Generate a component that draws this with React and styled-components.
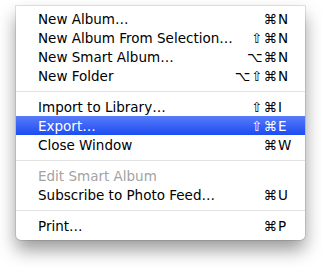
import React from 'react';
import styled, { createGlobalStyle } from 'styled-components';

const Global = createGlobalStyle`
  html, body {
    margin: 0;
    padding: 0;
    background: #ffffff;
  }
  body {
    font-family: "DejaVu Sans", "Liberation Sans", sans-serif;
  }
`;

const Page = styled.div`
  width: 322px;
  height: 268px;
  padding: 6px 0 0 16px;
  box-sizing: border-box;
`;

const Menu = styled.div`
  width: 289px;
  padding: 3px 0 5px;
  background: #ffffff;
  border-radius: 0 0 5px 5px;
  box-shadow: 0 10px 18px rgba(0, 0, 0, 0.4), 0 0 0 1px rgba(0, 0, 0, 0.1);
  display: flex;
  flex-direction: column;
`;

const Item = styled.div`
  height: 19px;
  display: flex;
  align-items: center;
  padding: 0 13px 0 22px;
  font-size: 13.5px;
  color: ${p => (p.$disabled ? '#a3a3a3' : p.$active ? '#ffffff' : '#000000')};
  background: ${p => (p.$active ? 'linear-gradient(#587cf8, #1c4cf2)' : 'transparent')};
`;

const Label = styled.span`
  flex: 1;
  white-space: nowrap;
`;

const Shortcut = styled.span`
  display: flex;
  align-items: center;
`;

const Mods = styled.span`
  letter-spacing: 1px;
`;

const Key = styled.span`
  width: 14px;
  text-align: left;
`;

const Separator = styled.div`
  height: 1px;
  margin: 6px 0 5px;
  background: #e2e2e2;
`;

const menu = [
  { label: 'New Album…', mods: '⌘', key: 'N' },
  { label: 'New Album From Selection…', mods: '⇧⌘', key: 'N' },
  { label: 'New Smart Album…', mods: '⌥⌘', key: 'N' },
  { label: 'New Folder', mods: '⌥⇧⌘', key: 'N' },
  { sep: true },
  { label: 'Import to Library…', mods: '⇧⌘', key: 'I' },
  { label: 'Export…', mods: '⇧⌘', key: 'E', active: true },
  { label: 'Close Window', mods: '⌘', key: 'W' },
  { sep: true },
  { label: 'Edit Smart Album', disabled: true },
  { label: 'Subscribe to Photo Feed…', mods: '⌘', key: 'U' },
  { sep: true },
  { label: 'Print…', mods: '⌘', key: 'P' },
];

export default function App() {
  return (
    <Page>
      <Global />
      <Menu>
        {menu.map((m, i) =>
          m.sep ? (
            <Separator key={i} />
          ) : (
            <Item key={i} $active={m.active} $disabled={m.disabled}>
              <Label>{m.label}</Label>
              {m.key && (
                <Shortcut>
                  <Mods>{m.mods}</Mods>
                  <Key>{m.key}</Key>
                </Shortcut>
              )}
            </Item>
          )
        )}
      </Menu>
    </Page>
  );
}
